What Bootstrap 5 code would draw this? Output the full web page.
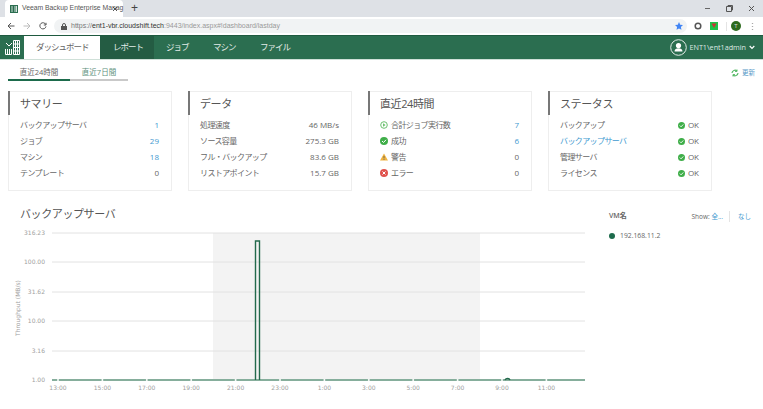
<!DOCTYPE html>
<html>

<head>
  <meta charset="utf-8">
  <meta name="viewport" content="width=device-width">
  <title>Veeam Backup Enterprise Manager</title>
  <link href="https://cdn.jsdelivr.net/npm/bootstrap@5.3.3/dist/css/bootstrap.min.css" rel="stylesheet" type="text/css" />
  <style>
    body{
      font-family: "Open Sans", "Noto Sans CJK JP", sans-serif;
      font-size: 8px;
      color: #666;
      overflow: hidden;
      background: #fff;
    }
    .tab-strip{ height: 17px; background: #dee1e6; padding-left: 5px; font-family: "Liberation Sans", "Noto Sans CJK JP", sans-serif; }
    .browser-tab{ width: 118px; height: 17px; background: #fff; border-radius: 4px 4px 0 0; padding: 0 5px; color: #555; font-size: 6.8px; white-space: nowrap; }
    .tab-title{ width: 86px; }
    .tab-plus{ font-size: 12px; color: #444; margin-left: 8px; line-height: 17px; }
    .win-btns{ margin-left: auto; gap: 15px; padding-right: 8px; }
    .tool-bar{ height: 18px; background: #fff; padding-left: 7px; }
    .url-box{ width: 633px; height: 14px; margin-left: 7px; background: #f1f3f4; border-radius: 7px; padding: 0 4px 0 7px; font-family: "Liberation Sans", sans-serif; font-size: 7px; color: #999; }
    .url-box b{ font-weight: 400; color: #333; }
    .url-http{ color: #777; }
    .tool-right{ margin-left: 7px; }
    .tool-sep{ width: 1px; height: 9px; background: #e4e4e4; }
    .menu-dots{ margin-left: 10px; }
    .app-bar{ height: 25px; background: #2b6e50; border-top: 1px solid #1f5a40; border-bottom: 1px solid #cfe0d8; color: #dfe9e4; font-size: 8.5px; letter-spacing: -1px; }
    .app-logo{ width: 24px; }
    .app-link{ height: 100%; color: #e3ece8; text-decoration: none; display: flex; align-items: center; white-space: nowrap; }
    .app-link.here{ background: #fff; color: #666; width: 76px; padding-left: 12px; }
    .app-link.dark{ background: #245c43; width: 54px; padding-left: 13px; }
    .app-link.plain{ width: 47px; padding-left: 12px; }
    .user-box{ margin-left: auto; padding-right: 8px; font-size: 7.2px; letter-spacing: 0; gap: 3px; }
    .sub-tabs{ height: 31px; padding: 0 8px 0 8px; }
    .sub-tab{ height: 21px; padding-top: 7px; color: #666; text-align: center; border-bottom: 2px solid #c9c9c9; font-size: 7.5px; line-height: 11px; }
    .sub-tab.on{ width: 62px; border-color: #1d6b4c; }
    .sub-tab.off{ width: 58px; color: #5d8f7c; }
    .refresh-link{ color: #5b9bc8; font-size: 6.5px; gap: 3px; height: 17px; margin-top: 4px; }
    .cards-row{ padding-left: 8px; gap: 16px; }
    .info-card{ width: 164px; height: 100px; border: 1px solid #eee; border-radius: 0; padding: 0 12px 0 11px; }
    .info-card::before{ content: ""; position: absolute; left: -1px; top: -1px; width: 2px; height: 24px; background: #777; }
    .card-head{ font-size: 11px; letter-spacing: -.4px; color: #555; height: 25px; line-height: 23px; }
    .info-row{ height: 16px; line-height: 16px; white-space: nowrap; }
    .jp-label{ letter-spacing: -.6px; }
    .num-link{ color: #3f9ad0; }
    .stat-ic{ gap: 3px; }
    .chart-wrap{ margin-top: 14px; }
    .chart-title{ font-size: 11px; letter-spacing: -.4px; color: #555; padding-left: 20px; height: 18px; line-height: 18px; }
    .chart-box{ width: 600px; }
    .chart-box svg{ display: block; }
    .axis-txt{ font-family: "DejaVu Sans", sans-serif; font-size: 6px; fill: #a0a0a0; }
    .legend-box{ margin-left: 9px; width: 145px; padding-top: 5px; font-size: 7px; }
    .legend-top{ height: 13px; width: 142px; }
    .show-links{ font-size: 6.5px; }
    .show-links a{ color: #3f9ad0; text-decoration: none; }
    .show-sep{ border-left: 1px solid #e4e4e4; height: 11px; margin: 0 8px 0 6px; }
    .legend-dot{ width: 6px; height: 6px; border-radius: 50%; background: #1d6b4c; margin-right: 5px; }
    .legend-item{ margin-top: 8px; font-size: 6.8px; }
  </style>
</head>

<body>
  <div class="tab-strip d-flex align-items-center">
    <div class="browser-tab d-flex align-items-center gap-1">
      <svg width="8" height="8" viewBox="0 0 8 8"><rect width="8" height="8" fill="#2b6e50"/><path d="M1 2h2M1 4h2M1 6h2M5 1v6M6.500 1v6" stroke="#fff" stroke-width=".8"/></svg>
      <span class="tab-title">Veeam Backup Enterprise Manag</span>
      <svg width="6" height="6" viewBox="0 0 6 6"><path d="M1 1l4 4M5 1L1 5" stroke="#555" stroke-width="1"/></svg>
    </div>
    <span class="tab-plus">+</span>
    <div class="win-btns d-flex align-items-center">
      <svg width="7" height="7" viewBox="0 0 7 7"><path d="M1 3.500h5" stroke="#666"/></svg>
      <svg width="7" height="7" viewBox="0 0 7 7"><path d="M.5 1.500h5v5h-5zM2 1.500V.5h4.500V5H5.500" fill="none" stroke="#555"/></svg>
      <svg width="7" height="7" viewBox="0 0 7 7"><path d="M1 1l5 5M6 1L1 6" stroke="#555"/></svg>
    </div>
  </div>
  <div class="tool-bar d-flex align-items-center">
    <svg width="8" height="8" viewBox="0 0 8 8"><path d="M7.500 4H1M4 1L1 4l3 3" fill="none" stroke="#555"/></svg>
    <svg class="ms-2" width="8" height="8" viewBox="0 0 8 8"><path d="M.5 4H7M4 1l3 3-3 3" fill="none" stroke="#bbb"/></svg>
    <svg class="ms-2" width="8" height="8" viewBox="0 0 8 8"><path d="M6.800 2.600A3.100 3.100 0 1 0 7 4.400M7 .8v2.200H4.800" fill="none" stroke="#555"/></svg>
    <div class="url-box d-flex align-items-center">
      <svg class="me-1" width="6" height="7" viewBox="0 0 6 7"><rect y="3" width="6" height="4" fill="#555"/><path d="M1.500 3V2a1.500 1.500 0 0 1 3 0v1" fill="none" stroke="#555"/></svg>
      <span><span class="url-http">https://</span><b>ent1-vbr.cloudshift.tech</b>:9443/index.aspx#!dashboard/lastday</span>
      <svg class="ms-auto" width="8" height="8" viewBox="0 0 10 10"><path d="M5 0l1.500 3.300 3.500.4-2.600 2.400.7 3.600L5 8l-3.100 1.700.7-3.600L0 3.700l3.500-.4z" fill="#4285f4"/></svg>
    </div>
    <div class="tool-right d-flex align-items-center">
      <svg width="8" height="8" viewBox="0 0 8 8"><circle cx="4" cy="4" r="2.800" fill="#fff" stroke="#555" stroke-width="1.500"/></svg>
      <svg class="ms-2" width="8" height="8" viewBox="0 0 8 8"><rect width="8" height="8" fill="#1fc24a"/><path d="M1.500 1.500L4 6l2.500-4.500z" fill="#c33"/></svg>
      <span class="tool-sep ms-2"></span>
      <svg class="ms-1" width="10" height="10" viewBox="0 0 10 10"><circle cx="5" cy="5" r="5" fill="#2c6a1e"/><text x="5" y="7" font-size="6" text-anchor="middle" fill="#ddd">T</text></svg>
      <svg class="menu-dots" width="3" height="9" viewBox="0 0 3 9"><path d="M1.500 1v.6M1.500 4.200v.6M1.500 7.400v.6" stroke="#555" stroke-width="1.300"/></svg>
    </div>
  </div>
  <nav class="app-bar d-flex align-items-stretch">
    <div class="app-logo d-flex align-items-center justify-content-center">
      <svg width="17" height="17" viewBox="0 0 17 17" fill="none" stroke="#fff" stroke-width="1"><path d="M9.500 1.500h6v14h-6zM11.500 1.500v14M13.500 1.500v14M9.500 5h6M9.500 8.500h6M9.500 12h6"/><path d="M1.500 10v5.500h6V10M3.500 10v5M5.500 10v5M2 4l3 3 3-3"/></svg>
    </div>
    <a class="app-link here" href="#">ダッシュボード</a>
    <a class="app-link dark" href="#">レポート</a>
    <a class="app-link plain" href="#">ジョブ</a>
    <a class="app-link plain" href="#">マシン</a>
    <a class="app-link plain" href="#">ファイル</a>
    <div class="user-box d-flex align-items-center">
      <svg width="17" height="17" viewBox="0 0 17 17"><circle cx="8.500" cy="8.500" r="7.800" fill="none" stroke="#e3ece8"/><circle cx="8.500" cy="6.500" r="2.600" fill="#fff"/><path d="M4.500 12.500c0-2.500 1.800-3.200 4-3.200s4 .7 4 3.200z" fill="#fff"/></svg>
      <span>ENT1\ent1admin</span>
      <svg width="6" height="5" viewBox="0 0 6 5"><path d="M.7 1l2.300 2.400L5.300 1" fill="none" stroke="#fff" stroke-width="1.200"/></svg>
    </div>
  </nav>
  <div class="sub-tabs d-flex">
    <div class="sub-tab on">直近24時間</div>
    <div class="sub-tab off">直近7日間</div>
    <div class="refresh-link ms-auto d-flex align-items-center">
      <svg width="8" height="8" viewBox="0 0 8 8" fill="none" stroke="#57b968" stroke-width="1.200"><path d="M1 4a3 3 0 0 1 5-2M7 4a3 3 0 0 1-5 2"/><path d="M6 .5V2.500H4M2 7.500V5.500h2" stroke-width=".9"/></svg>
      <span>更新</span>
    </div>
  </div>
  <div class="cards-row d-flex">
    <div class="info-card card">
      <div class="card-head">サマリー</div>
      <div class="info-row d-flex justify-content-between"><span class="jp-label">バックアップサーバ</span><span class="num-link">1</span></div>
      <div class="info-row d-flex justify-content-between"><span class="jp-label">ジョブ</span><span class="num-link">29</span></div>
      <div class="info-row d-flex justify-content-between"><span class="jp-label">マシン</span><span class="num-link">18</span></div>
      <div class="info-row d-flex justify-content-between"><span class="jp-label">テンプレート</span><span>0</span></div>
    </div>
    <div class="info-card card">
      <div class="card-head">データ</div>
      <div class="info-row d-flex justify-content-between"><span class="jp-label">処理速度</span><span>46 MB/s</span></div>
      <div class="info-row d-flex justify-content-between"><span class="jp-label">ソース容量</span><span>275.3 GB</span></div>
      <div class="info-row d-flex justify-content-between"><span class="jp-label">フル・バックアップ</span><span>83.6 GB</span></div>
      <div class="info-row d-flex justify-content-between"><span class="jp-label">リストアポイント</span><span>15.7 GB</span></div>
    </div>
    <div class="info-card card">
      <div class="card-head">直近24時間</div>
      <div class="info-row d-flex justify-content-between">
        <span class="stat-ic jp-label d-flex align-items-center"><svg width="8" height="8" viewBox="0 0 8 8"><circle cx="4" cy="4" r="3.300" fill="#fff" stroke="#6cc070"/><path d="M3 2.200L5.600 4 3 5.800z" fill="#6cc070"/></svg>合計ジョブ実行数</span><span class="num-link">7</span>
      </div>
      <div class="info-row d-flex justify-content-between">
        <span class="stat-ic jp-label d-flex align-items-center"><svg width="8" height="8" viewBox="0 0 8 8"><circle cx="4" cy="4" r="4" fill="#3fae49"/><path d="M2 4l1.500 1.500L6 2.800" fill="none" stroke="#fff"/></svg>成功</span><span class="num-link">6</span>
      </div>
      <div class="info-row d-flex justify-content-between">
        <span class="stat-ic jp-label d-flex align-items-center"><svg width="8" height="8" viewBox="0 0 8 8"><path d="M4 .5L8 7.500H0z" fill="#f0b440"/><path d="M4 3v2.400M4 6v.8" stroke="#555" stroke-width=".8"/></svg>警告</span><span>0</span>
      </div>
      <div class="info-row d-flex justify-content-between">
        <span class="stat-ic jp-label d-flex align-items-center"><svg width="8" height="8" viewBox="0 0 8 8"><circle cx="4" cy="4" r="4" fill="#e0524d"/><path d="M2.500 2.500l3 3M5.500 2.500l-3 3" stroke="#fff"/></svg>エラー</span><span>0</span>
      </div>
    </div>
    <div class="info-card card">
      <div class="card-head">ステータス</div>
      <div class="info-row d-flex justify-content-between">
        <span class="jp-label">バックアップ</span><span class="stat-ic d-flex align-items-center"><svg width="7" height="7" viewBox="0 0 8 8"><circle cx="4" cy="4" r="4" fill="#3fae49"/><path d="M2 4l1.500 1.500L6 2.800" fill="none" stroke="#fff"/></svg>OK</span>
      </div>
      <div class="info-row d-flex justify-content-between">
        <span class="num-link jp-label">バックアップサーバ</span><span class="stat-ic d-flex align-items-center"><svg width="7" height="7" viewBox="0 0 8 8"><circle cx="4" cy="4" r="4" fill="#3fae49"/><path d="M2 4l1.500 1.500L6 2.800" fill="none" stroke="#fff"/></svg>OK</span>
      </div>
      <div class="info-row d-flex justify-content-between">
        <span class="jp-label">管理サーバ</span><span class="stat-ic d-flex align-items-center"><svg width="7" height="7" viewBox="0 0 8 8"><circle cx="4" cy="4" r="4" fill="#3fae49"/><path d="M2 4l1.500 1.500L6 2.800" fill="none" stroke="#fff"/></svg>OK</span>
      </div>
      <div class="info-row d-flex justify-content-between">
        <span class="jp-label">ライセンス</span><span class="stat-ic d-flex align-items-center"><svg width="7" height="7" viewBox="0 0 8 8"><circle cx="4" cy="4" r="4" fill="#3fae49"/><path d="M2 4l1.500 1.500L6 2.800" fill="none" stroke="#fff"/></svg>OK</span>
      </div>
    </div>
  </div>
  <div class="chart-wrap d-flex">
    <div class="chart-box">
      <div class="chart-title">バックアップサーバ</div>
      <svg id="chart" width="600" height="185" viewBox="0 0 600 185"></svg>
    </div>
    <div class="legend-box">
      <div class="legend-top d-flex align-items-center">
        <span class="fw-semibold">VM名</span>
        <span class="show-links ms-auto d-flex align-items-center">Show:&nbsp;<a href="#">全...</a><span class="show-sep"></span><a href="#">なし</a></span>
      </div>
      <div class="legend-item d-flex align-items-center"><span class="legend-dot"></span>192.168.11.2</div>
    </div>
  </div>
  <script>
    // chart: svg y = page y - 222
    const chart = document.querySelector("#chart")
    const yTicks = [[10, "316.23"], [39, "100.00"], [69, "31.62"], [98, "10.00"], [128, "3.16"], [157, "1.00"]]
    const xTicks = ["13:00", "15:00", "17:00", "19:00", "21:00", "23:00", "1:00", "3:00", "5:00", "7:00", "9:00", "11:00"]
    let out = '<rect x="213" y="10" width="267" height="147" fill="#f3f3f3"/>'
    yTicks.forEach(function(t){
      out += '<line x1="52" x2="585" y1="' + t[0] + '" y2="' + t[0] + '" stroke="#e2e2e2"/>'
      out += '<text class="axis-txt" x="45" y="' + (t[0] + 2) + '" text-anchor="end">' + t[1] + '</text>'
    })
    out += '<text class="axis-txt" transform="translate(20,85) rotate(-90)" text-anchor="middle">Throughput (MB/s)</text>'
    out += '<line x1="52" x2="585" y1="157" y2="157" stroke="#86ae9c" stroke-width="2"/>'
    out += '<path d="M255.500 157V18h4V157" fill="none" stroke="#236a4c" stroke-width="1.400"/>'
    out += '<path d="M505 157c1-2 4-2 5 0" fill="none" stroke="#236a4c" stroke-width="1.400"/>'
    xTicks.forEach(function(t, i){
      const x = 58 + i * 44.4
      out += '<circle cx="' + x + '" cy="157" r="1" fill="#fff"/>'
      out += '<text class="axis-txt" x="' + x + '" y="167" text-anchor="middle">' + t + '</text>'
    })
    chart.innerHTML = out
  </script>
  <script src="https://cdn.jsdelivr.net/npm/bootstrap@5.3.3/dist/js/bootstrap.bundle.min.js"></script>
</body>

</html>
